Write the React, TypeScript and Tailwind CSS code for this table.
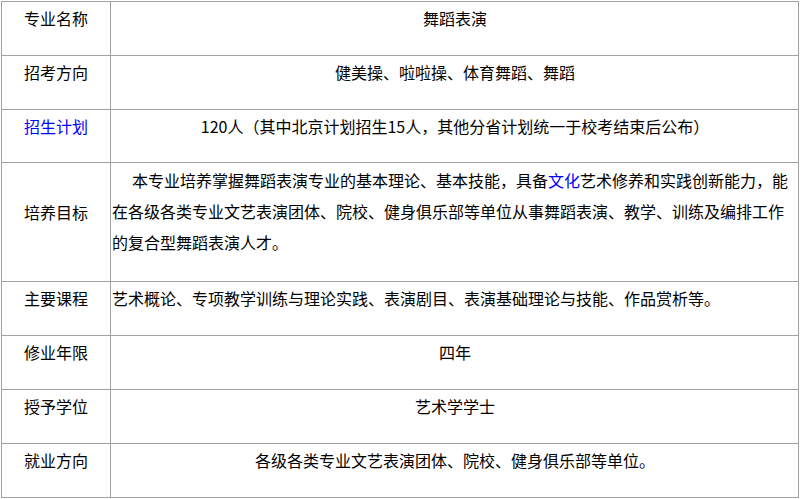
function Row({
  label,
  labelBlue,
  height,
  labelPad = "pt-px",
  children,
}: {
  label: string;
  labelBlue?: boolean;
  height: string;
  labelPad?: string;
  children: React.ReactNode;
}) {
  return (
    <div className={`flex ${height}`}>
      <div
        className={`w-[109px] shrink-0 border-r border-b border-[#a0a0a0] text-center ${labelPad} ${
          labelBlue ? "text-[#0000ff]" : "text-black"
        }`}
      >
        {label}
      </div>
      <div className="w-[688px] shrink-0 border-r border-b border-[#a0a0a0] pl-px text-black">
        {children}
      </div>
    </div>
  );
}

export default function App() {
  return (
    <div
      className="w-[801px] h-[499px] bg-white pl-px pt-px text-[16px] leading-[31px]"
      style={{ fontFamily: '"Noto Sans CJK SC", "Microsoft YaHei", sans-serif' }}
    >
      <div className="w-[798px] border-l border-t border-[#a0a0a0]">
        <Row label="专业名称" height="h-[54px]">
          <div className="pt-px text-center">舞蹈表演</div>
        </Row>
        <Row label="招考方向" height="h-[54px]">
          <div className="pt-px text-center">健美操、啦啦操、体育舞蹈、舞蹈</div>
        </Row>
        <Row label="招生计划" labelBlue height="h-[53px]">
          <div className="pt-px text-center">120人（其中北京计划招生15人，其他分省计划统一于校考结束后公布）</div>
        </Row>
        <Row label="培养目标" height="h-[119px]" labelPad="pt-[34px]">
          <div className="pt-[2px]">
            <div className="pl-[20px] whitespace-nowrap">
              本专业培养掌握舞蹈表演专业的基本理论、基本技能，具备
              <span className="text-[#0000ff]">文化</span>
              艺术修养和实践创新能力，能
            </div>
            <div className="whitespace-nowrap">
              在各级各类专业文艺表演团体、院校、健身俱乐部等单位从事舞蹈表演、教学、训练及编排工作
            </div>
            <div className="whitespace-nowrap">的复合型舞蹈表演人才。</div>
          </div>
        </Row>
        <Row label="主要课程" height="h-[54px]">
          <div className="pt-px">艺术概论、专项教学训练与理论实践、表演剧目、表演基础理论与技能、作品赏析等。</div>
        </Row>
        <Row label="修业年限" height="h-[54px]">
          <div className="pt-px text-center">四年</div>
        </Row>
        <Row label="授予学位" height="h-[54px]">
          <div className="pt-px text-center">艺术学学士</div>
        </Row>
        <Row label="就业方向" height="h-[54px]">
          <div className="pt-px text-center">各级各类专业文艺表演团体、院校、健身俱乐部等单位。</div>
        </Row>
      </div>
    </div>
  );
}
